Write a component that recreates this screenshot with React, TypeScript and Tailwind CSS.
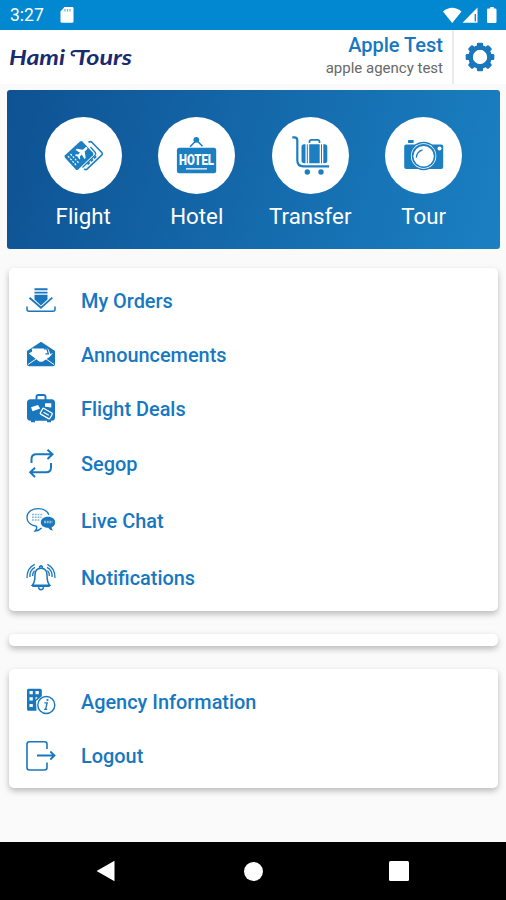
import type { ReactNode } from 'react';
import clsx from 'clsx';

const BLUE = '#1877bd';

interface IconProps {
  children: ReactNode;
}

function MenuIcon({ children }: IconProps) {
  return (
    <svg viewBox="0 0 30 30" className="w-[30px] h-[30px] shrink-0" fill="none" stroke={BLUE} strokeWidth="1.5">
      {children}
    </svg>
  );
}

function CircleIcon({ children }: IconProps) {
  return (
    <svg viewBox="0 0 77 77" className="w-[77px] h-[77px] rounded-full bg-white" fill="#1c7fc2" stroke="none">
      {children}
    </svg>
  );
}

const ordersIcon = (
  <MenuIcon>
    <path d="M8.5 3.2h13M8.5 6.6h13" strokeWidth="1.9" />
    <path d="M8.5 8.8h13v4.7l-6.500 6-6.500-6z" fill={BLUE} stroke="none" />
    <path d="M3.5 11.7 15 21.8l11.3-10.1" strokeWidth="1.8" />
    <path d="M1 20.5v2.700q0 2 2 2h24q2 0 2-2v-2.700" strokeWidth="1.5" />
  </MenuIcon>
);

const announcementsIcon = (
  <MenuIcon>
    <path d="M15 1.700 29 11v13q0 2.300-2.300 2.300H3.300Q1 26.300 1 24V11z" fill={BLUE} stroke="none" />
    <path d="M5.700 8.600 22 8.400l2.500 5.500 2.500-1-3.500 4.200-6.300 4.100q-2.200 1.200-4.400 0L2.800 13.500l3.400-2z" fill="#fff" stroke="none" />
    <path d="M18 8.800h3l1.300 5h-2.800" strokeWidth="1.300" />
    <path d="m2 24.500 8-5.500M28 24.500 20 19" stroke="#fff" strokeWidth="1" />
  </MenuIcon>
);

const dealsIcon = (
  <MenuIcon>
    <path d="M10.500 6V3Q10.500 1 12.500 1h5q2 0 2 2v3" strokeWidth="1.900" />
    <rect x="1" y="5.300" width="28" height="21.500" rx="3.500" fill={BLUE} stroke="none" />
    <path d="M5 26h4v2.200H5zM21 26h4v2.200h-4z" fill={BLUE} stroke="none" />
    <path d="m5 13.300 7-2.300 2.200 3.500-7.700 2.800zM19 9.300h6.300v4.300l-6.300-.8z" fill="#fff" stroke="none" />
    <rect x="14.800" y="16.300" width="11" height="6.500" rx="1" transform="rotate(30 20.300 19.500)" fill={BLUE} stroke="#fff" strokeWidth="1.300" />
    <path d="m17.500 18.200 5.300 3" stroke="#fff" strokeWidth="1.300" />
  </MenuIcon>
);

const segopIcon = (
  <MenuIcon>
    <path d="M5.500 14v-4q0-4.800 4.800-4.800H26M21.500.800 26.500 5.200l-5 4.800" strokeWidth="2" />
    <path d="M25 14v4.500q0 4.800-4.800 4.800H5M9 18.700l-4.800 4.600L9 28" strokeWidth="2" />
  </MenuIcon>
);

const chatIcon = (
  <MenuIcon>
    <path d="M22.800 8.800C21.300 4.800 17 2.700 12 2.700 5.800 2.700 1 6 1 11.200c0 3.500 2 6.500 5.500 8l4 1.200q1 2.100-1.500 4.600 4.500-.5 6.600-3" strokeWidth="1.300" />
    <path d="M6 8.500h10.500M6 11.200h9.500M6 13.900h7.500" stroke="#7fb2da" strokeWidth="1.500" strokeDasharray="1.800 1" />
    <path d="M22 10.700c4.200 0 7.200 2.300 7.200 5.600 0 2.300-1.300 4.100-3.600 5 .1 1.500.6 2.400 1.600 3.300-2.500-.2-4-1.300-4.900-2.800-4.600.1-7.500-2.200-7.500-5.500s3-5.600 7.200-5.600z" fill={BLUE} stroke="none" />
    <path d="M18 16h8.500" stroke="#8dbce0" strokeWidth="2.500" strokeDasharray="2 .7" />
  </MenuIcon>
);

const bellIcon = (
  <MenuIcon>
    <path d="M15 5.200c-4.400 0-6 3-6 6.800 0 5.500-.6 8-2.700 10.300h17.400C21.600 20 21 17.500 21 12c0-3.800-1.600-6.800-6-6.800z" />
    <path d="M13.700 5V3.500q1.300-1.200 2.600 0V5M6.300 23.300h17.400M12.500 24.200q.3 2.500 2.500 2.500t2.500-2.500" />
    <path d="M8.700 1.300C3.500 3.700.8 8.200 1 15M9 4.300C5.200 6.300 3.600 9.700 3.900 14M8.500 7.600C6.800 9.300 6.500 11 6.600 13" strokeWidth="1.300" />
    <path d="M21.300 1.300C26.500 3.700 29.200 8.200 29 15M21 4.300c3.800 2 5.400 5.400 5.100 9.700M21.500 7.600c1.700 1.700 2 3.400 1.900 5.400" strokeWidth="1.300" />
  </MenuIcon>
);

const agencyIcon = (
  <MenuIcon>
    <path d="M2.500 1.700h11.800q1.500 0 1.500 1.500v6L10 14l.5 9.700h-8Q1 23.700 1 22.200v-19q0-1.500 1.500-1.500z" fill={BLUE} stroke="none" />
    <path d="M3.500 4h3.300v3.200H3.500zM9.500 4h3.300v3.200H9.500zM3.500 10.300h3.300v3.200H3.500zM9.500 10.300h2.300l-2.300 2.500zM3.500 17h3.300v3H3.500z" fill="#fff" stroke="none" />
    <circle cx="20.300" cy="18" r="8.500" fill="#fff" strokeWidth="1.400" />
    <path d="M18.400 15.900h2.800l-1.500 5.800q-.3 1.100 1.500.3M18.100 22.400h2.700" strokeWidth="1.300" />
    <circle cx="21.500" cy="13" r="1.100" fill={BLUE} stroke="none" />
  </MenuIcon>
);

const logoutIcon = (
  <MenuIcon>
    <path d="M21 8V3.200Q21 .8 18.600.8H3.400Q1 .8 1 3.200v23.300Q1 29 3.400 29h15.200q2.400 0 2.400-2.500V21.500" strokeWidth="1.600" />
    <path d="M11 14.500h17.500M24.300 10.500l4.200 4-4.200 4" strokeWidth="1.800" />
  </MenuIcon>
);

const flightIcon = (
  <CircleIcon>
    <path d="M20 38.200 35 24.500q1.200-1 2.400 0L48 35.800q1 1.200 0 2.400L33.200 52.500q-1.200 1-2.400 0L20 40.800q-1-1.300 0-2.600z" />
    <path d="M43.500 25.300q2-1.500 3.600.2l9.700 10q1.200 1.400-.1 2.700L42 52.200q-1.500 1.100-2.800-.5" fill="none" stroke="#1c7fc2" strokeWidth="1.600" />
    <path d="m45.500 30 4.800 5.500q1 1.300-.2 2.700L37.500 50.500" fill="none" stroke="#1c7fc2" strokeWidth="1.300" />
    <path d="m42.500 47.500 10-9.500" stroke="#1c7fc2" strokeWidth="1.800" strokeDasharray="3 1.500" />
    <path d="m23 39.200 8.700 9.500M25.500 37l8.700 9.500" stroke="#fff" strokeWidth="1.200" strokeDasharray="2 1.300" />
    <g transform="translate(37.500 35) rotate(45) scale(.9)" fill="#fff">
      <path d="M0-7.200c1.100 0 1.400 1.100 1.400 2.200v3L7 2v1.900L1.400 2.500v3l2 1.600v1.300L0 7.500l-3.400.9V7.100l2-1.600v-3L-7 3.900V2l5.600-4v-3c0-1.100.3-2.200 1.400-2.200z" />
    </g>
  </CircleIcon>
);

const hotelIcon = (
  <CircleIcon>
    <path d="m32 29.700 5.500-5.500h2l5 5" fill="none" stroke="#1c7fc2" strokeWidth="1.600" />
    <circle cx="38.300" cy="22.800" r="2.900" />
    <rect x="18.900" y="30.700" width="39.300" height="25.600" rx="2.500" />
    <text x="21" y="48.200" textLength="35" lengthAdjust="spacingAndGlyphs" fill="#fff" className="font-[Roboto] text-[14.500px] font-black">
      HOTEL
    </text>
    <path d="M28 51.800h21" stroke="#fff" strokeWidth="1.300" />
  </CircleIcon>
);

const transferIcon = (
  <CircleIcon>
    <path d="M20.300 20.300h2q3 0 3 3v20q0 6 6 6h25.800" fill="none" stroke="#1c7fc2" strokeWidth="2.200" />
    <circle cx="35.300" cy="55" r="2.700" />
    <circle cx="49" cy="55" r="2.700" />
    <path d="M37.500 26v-1.200q0-2 2-2h6q2 0 2 2V26" fill="none" stroke="#1c7fc2" strokeWidth="1.700" />
    <path d="M33.500 27.300v19h-1.300q-2.700 0-2.700-2.700V30q0-2.700 2.700-2.700zM37.200 27.300h10.500v19H37.200zM51.300 27.300h1.300q2.700 0 2.700 2.700v13.600q0 2.700-2.700 2.700h-1.300z" />
    <path d="M35.300 27.300v19M49.500 27.300v19" stroke="#1c7fc2" strokeWidth="1" />
  </CircleIcon>
);

const tourIcon = (
  <CircleIcon>
    <rect x="23" y="23" width="5.700" height="3" rx=".7" />
    <rect x="19.200" y="27.500" width="39" height="24.500" rx="2" />
    <circle cx="38.600" cy="39" r="14.200" />
    <circle cx="38.600" cy="39" r="12.700" fill="#fff" />
    <circle cx="38.600" cy="39" r="11.900" />
    <circle cx="38.600" cy="39.300" r="10.200" fill="#fff" />
    <path d="M31.300 40.800q.2-6 6.200-8" fill="none" stroke="#1c7fc2" strokeWidth="1.300" />
    <circle cx="54.500" cy="31.500" r="2" fill="#fff" />
  </CircleIcon>
);

const services = [
  { label: 'Flight', icon: flightIcon },
  { label: 'Hotel', icon: hotelIcon },
  { label: 'Transfer', icon: transferIcon },
  { label: 'Tour', icon: tourIcon },
];

const mainMenu = [
  { label: 'My Orders', icon: ordersIcon, height: 'h-[54px]' },
  { label: 'Announcements', icon: announcementsIcon, height: 'h-[54px]' },
  { label: 'Flight Deals', icon: dealsIcon, height: 'h-[54px]' },
  { label: 'Segop', icon: segopIcon, height: 'h-[56px]' },
  { label: 'Live Chat', icon: chatIcon, height: 'h-[58px]' },
  { label: 'Notifications', icon: bellIcon, height: 'h-[56px]' },
];

const accountMenu = [
  { label: 'Agency Information', icon: agencyIcon, height: 'h-[54px]' },
  { label: 'Logout', icon: logoutIcon, height: 'h-[54px]' },
];

function StatusBar() {
  return (
    <div className="h-[30px] bg-[#0288d1] flex items-center justify-between pl-[10px] pr-[8px]">
      <div className="flex items-center gap-[16px] text-white">
        <span className="text-[17.500px] leading-none pt-[2px]">3:27</span>
        <svg viewBox="0 0 14 16" className="w-[14px] h-[16px]" fill="#fff">
          <path d="M4.500 0h7.700q1.300 0 1.300 1.300v13q0 1.500-1.500 1.500H2Q.5 15.800.5 14.300V4.500z" />
          <path d="M5 2v2.500M7.500 2v2.500M10 2v2.500" stroke="#62b4e2" strokeWidth="1.200" />
        </svg>
      </div>
      <svg viewBox="0 0 56 18" className="w-[56px] h-[18px]" fill="#fff">
        <path d="M1 5.500Q10.200-2 19.500 5.500L10.200 17z" />
        <path d="M35.500 1.500v15.300h-15z" />
        <path d="M33.300 8v7.500" stroke="#0288d1" strokeWidth="1.300" />
        <path d="M48.300 1h3.500v1.500h1.400q1.300 0 1.300 1.300v12q0 1.300-1.300 1.300H46.300q-1.300 0-1.300-1.300v-12q0-1.300 1.300-1.300h2z" />
      </svg>
    </div>
  );
}

function Header() {
  return (
    <header className="h-[54px] bg-white flex">
      <svg viewBox="0 0 140 54" className="w-[140px] h-[54px]" fill="#182a70">
        <text x="9" y="35" textLength="56" lengthAdjust="spacingAndGlyphs" className="font-[Lato] text-[21px] font-bold italic">
          Hami
        </text>
        <text x="75" y="35" textLength="57" lengthAdjust="spacingAndGlyphs" className="font-[Lato] text-[21px] font-bold italic">
          Tours
        </text>
        {/* swash on the T */}
        <path d="M80 21h-4.500q-4 0-4 2.600 0 2.300 3.500 1.800" fill="none" stroke="#182a70" strokeWidth="1.800" />
      </svg>
      <div className="flex-1 flex flex-col items-end pr-[9px] pt-[4px]">
        <span className="text-[20px] leading-[22px] font-medium text-[#1778c2]">Apple Test</span>
        <span className="text-[15px] leading-[18px] mt-[3px] text-[#686868]">apple agency test</span>
      </div>
      <div className="w-[54px] border-l-2 border-[#ebebeb] flex items-center justify-center">
        <svg viewBox="-12 -12 24 24" className="w-[34px] h-[34px]" fill={BLUE}>
          {[0, 45, 90, 135, 180, 225, 270, 315].map((angle) => (
            <rect key={angle} x="-2.200" y="-10.100" width="4.400" height="5" rx=".9" transform={`rotate(${angle})`} />
          ))}
          <circle r="6.700" fill="none" stroke={BLUE} strokeWidth="3.200" />
        </svg>
      </div>
    </header>
  );
}

interface MenuCardProps {
  items: typeof mainMenu;
}

function MenuCard({ items }: MenuCardProps) {
  return (
    <div className="bg-white rounded-[5px] pt-[6px] pb-[5px] shadow-[0_3px_6px_rgba(0,0,0,0.26)]">
      {items.map((item) => (
        <div key={item.label} className={clsx('flex items-center gap-[25px] pl-[17px]', item.height)}>
          {item.icon}
          <span className="pt-[2px] text-[19.900px] font-medium text-[#1778c2]">{item.label}</span>
        </div>
      ))}
    </div>
  );
}

export default function App() {
  return (
    <div className="w-[506px] h-[900px] flex flex-col overflow-hidden bg-[#fafafa] font-[Roboto,sans-serif]">
      <StatusBar />
      <Header />

      <main className="flex-1 pt-[6px]">
        <div className="ml-[7px] mr-[6px] h-[159px] rounded-[3px] bg-linear-[105deg,#0e5293,#1a80c2] grid grid-cols-[repeat(4,113.500px)] pl-[19.500px] pt-[26.500px]">
          {services.map((service) => (
            <div key={service.label} className="flex flex-col items-center">
              {service.icon}
              <span className="mt-[8px] text-[22.300px] leading-[28px] text-white">{service.label}</span>
            </div>
          ))}
        </div>

        <div className="mt-[19px] ml-[9px] mr-[8px] flex flex-col gap-[23px]">
          <MenuCard items={mainMenu} />
          <div className="h-[12px] bg-white rounded-[5px] shadow-[0_3px_6px_rgba(0,0,0,0.26)]" />
          <MenuCard items={accountMenu} />
        </div>
      </main>

      <nav className="h-[58px] bg-black flex items-center pl-[96px]">
        <svg viewBox="0 0 19 22" className="w-[19px] h-[22px]" fill="#fff">
          <path d="M18.500.8v20.400L.6 11z" />
        </svg>
        <div className="ml-[129px] w-[19px] h-[19px] rounded-full bg-white" />
        <div className="ml-[126px] w-[20px] h-[20px] rounded-[1.500px] bg-white" />
      </nav>
    </div>
  );
}
